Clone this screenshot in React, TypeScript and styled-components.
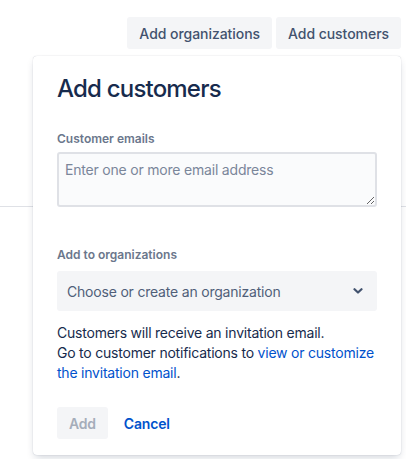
import styled, { createGlobalStyle } from "styled-components";

const GlobalStyle = createGlobalStyle`
    body {
        margin: 0;
        background: #ffffff;
        font-family: Inter, "Noto Sans", sans-serif;
        color: #172B4D;
        letter-spacing: -0.2px;
    }
`;

const Page = styled.div`
    position: relative;
    width: 406px;
    height: 459px;
    overflow: hidden;
`;

const Toolbar = styled.div`
    display: flex;
    justify-content: flex-end;
    gap: 4px;
    padding: 17px 5px 0 0;
`;

const ToolButton = styled.button`
    height: 32px;
    padding: 0 12px;
    border: none;
    border-radius: 3px;
    background: #F4F5F7;
    color: #42526E;
    font-family: inherit;
    font-size: 14px;
    font-weight: 500;
    letter-spacing: -0.05px;
    cursor: pointer;
`;

const Content = styled.div`
    padding-top: 157px;
`;

const Divider = styled.hr`
    margin: 0;
    border: none;
    border-top: 1px solid #DFE1E6;
`;

const Popup = styled.div`
    position: absolute;
    top: 56px;
    left: 33px;
    width: 368px;
    box-sizing: border-box;
    padding: 19px 24px 16px;
    background: #ffffff;
    border-radius: 4px;
    box-shadow: 0 4px 8px -2px rgba(9, 30, 66, 0.2), 0 0 1px rgba(9, 30, 66, 0.28);
`;

const Title = styled.h2`
    margin: 0;
    font-size: 24px;
    line-height: 28px;
    font-weight: 500;
    color: #172B4D;
    letter-spacing: -0.8px;
`;

const Field = styled.div<{ $top: number }>`
    display: flex;
    flex-direction: column;
    margin-top: ${(p) => p.$top}px;
`;

const Label = styled.label<{ $gap: number }>`
    font-size: 12px;
    line-height: 16px;
    font-weight: 600;
    color: #6B778C;
    letter-spacing: 0;
    margin-bottom: ${(p) => p.$gap}px;
`;

const TextArea = styled.textarea`
    box-sizing: border-box;
    width: 100%;
    height: 55px;
    padding: 6px;
    border: 2px solid #DFE1E6;
    border-radius: 3px;
    background: #FAFBFC;
    font-family: inherit;
    font-size: 14px;
    line-height: 20px;
    letter-spacing: -0.2px;
    color: #172B4D;
    resize: vertical;
    outline: none;
    &::placeholder {
        color: #7A869A;
    }
`;

const Select = styled.div`
    display: flex;
    align-items: center;
    justify-content: space-between;
    height: 40px;
    padding: 0 14px 0 10px;
    border-radius: 3px;
    background: #F4F5F7;
    font-size: 14px;
    color: #505F79;
    cursor: pointer;
`;

const Note = styled.p`
    margin: 12px 0 0;
    font-size: 14px;
    line-height: 20px;
    letter-spacing: -0.22px;
    color: #172B4D;
`;

const Link = styled.a`
    color: #0052CC;
    text-decoration: none;
`;

const Actions = styled.div`
    display: flex;
    gap: 4px;
    margin-top: 24px;
`;

const ActionButton = styled.button<{ $link?: boolean }>`
    height: 32px;
    padding: 0 12px;
    border: none;
    border-radius: 3px;
    background: ${(p) => (p.$link ? "transparent" : "#F4F5F7")};
    color: ${(p) => (p.$link ? "#0052CC" : "#A5ADBA")};
    font-family: inherit;
    font-size: 14px;
    font-weight: 600;
    letter-spacing: -0.2px;
    cursor: ${(p) => (p.$link ? "pointer" : "not-allowed")};
`;

function Chevron() {
    return (
        <svg width="10" height="8" viewBox="0 0 10 8">
            <path d="M1.5 2.2 L5 5.5 L8.5 2.2" fill="none" stroke="#42526E" strokeWidth="2.2" strokeLinecap="round" strokeLinejoin="round" />
        </svg>
    );
}

function App() {
    return (
        <Page>
            <GlobalStyle />
            <Toolbar>
                <ToolButton>Add organizations</ToolButton>
                <ToolButton>Add customers</ToolButton>
            </Toolbar>
            <Content>
                <Divider />
            </Content>
            <Popup>
                <Title>Add customers</Title>
                <Field $top={28}>
                    <Label $gap={5}>Customer emails</Label>
                    <TextArea placeholder="Enter one or more email address" />
                </Field>
                <Field $top={40}>
                    <Label $gap={8}>Add to organizations</Label>
                    <Select>
                        <span>Choose or create an organization</span>
                        <Chevron />
                    </Select>
                </Field>
                <Note>
                    Customers will receive an invitation email.
                    <br />
                    Go to customer notifications to <Link href="#">view or customize the invitation email</Link>.
                </Note>
                <Actions>
                    <ActionButton disabled>Add</ActionButton>
                    <ActionButton $link>Cancel</ActionButton>
                </Actions>
            </Popup>
        </Page>
    );
}

export default App;
